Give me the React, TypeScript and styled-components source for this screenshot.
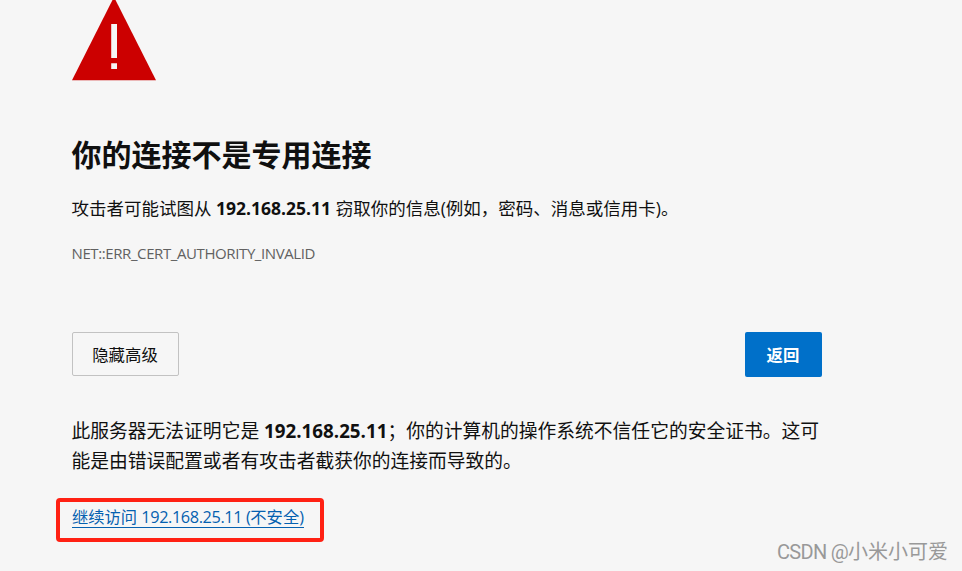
import styled, { createGlobalStyle } from "styled-components";

const GlobalStyle = createGlobalStyle`
  * {
    box-sizing: border-box;
  }

  body {
    margin: 0;
    height: 571px;
    overflow: hidden;
    background: #f6f6f6;
    color: #101010;
    font-family: "Open Sans", "Noto Sans CJK SC", sans-serif;
  }
`;

const Page = styled.main`
  position: relative;
  height: 571px;
  padding-left: 72px;
  overflow: hidden;
`;

const Content = styled.div`
  display: flex;
  flex-direction: column;
  width: 750px;
`;

const WarningIcon = styled.svg`
  display: block;
  width: 84px;
  height: 81px;
`;

const Title = styled.h1`
  margin: 52px 0 0 -0.5px;
  font-size: 30px;
  line-height: 44px;
  font-weight: 700;
`;

const Summary = styled.p`
  margin: 17px 0 0 -0.5px;
  font-size: 17.5px;
  line-height: 28px;
  white-space: nowrap;
`;

const ErrorCode = styled.div`
  margin: 19px 0 0 -0.5px;
  color: #616161;
  font-size: 15px;
  line-height: 24px;
  letter-spacing: -0.4px;
`;

const Actions = styled.div`
  display: flex;
  justify-content: space-between;
  align-items: flex-start;
  margin-top: 67px;
`;

const Button = styled.button<{ $primary?: boolean }>`
  width: ${({ $primary }) => ($primary ? "77px" : "107px")};
  height: ${({ $primary }) => ($primary ? "45px" : "44px")};
  padding: 0 1px 1px 0;
  border: ${({ $primary }) => ($primary ? "0" : "1px solid #c2c2c2")};
  border-radius: 2px;
  background: ${({ $primary }) => ($primary ? "#0070c9" : "transparent")};
  color: ${({ $primary }) => ($primary ? "#fff" : "#101010")};
  font-family: inherit;
  font-size: 16.4px;
  font-weight: ${({ $primary }) => ($primary ? 700 : 400)};
`;

const Details = styled.p`
  margin: 39px 0 0 -0.5px;
  font-size: 18.77px;
  line-height: 30px;
  white-space: nowrap;
`;

const Highlight = styled.div`
  width: 268px;
  height: 44px;
  margin: 22px 0 0 -16px;
  padding: 4px 0 0 12px;
  border: 4px solid #ff2113;
  border-radius: 4px;
`;

const ProceedLink = styled.a`
  display: inline-block;
  height: 21px;
  border-bottom: 1px solid #0561b0;
  color: #0561b0;
  font-size: 16.3px;
  line-height: 20px;
  text-decoration: none;
  white-space: nowrap;
`;

const Address = styled.span`
  letter-spacing: -0.4px;
`;

const Watermark = styled.div`
  position: absolute;
  right: 14px;
  bottom: 4px;
  color: #999;
  font-family: Roboto, "Noto Sans CJK SC", sans-serif;
  font-size: 20px;
  line-height: 30px;
  white-space: nowrap;
`;

const Brand = styled.span`
  letter-spacing: -0.7px;
`;

export default function App() {
  return (
    <>
      <GlobalStyle />
      <Page>
        <Content>
          <WarningIcon viewBox="0 0 84 81">
            <path d="M42 -3L84 80.3H0Z" fill="#c00" />
            <path d="M39.2 24h5.8v34h-5.8zM39.2 63.3h5.8V69h-5.8z" fill="#f6f6f6" />
          </WarningIcon>

          <Title>你的连接不是专用连接</Title>
          <Summary>
            攻击者可能试图从 <strong>192.168.25.11</strong>{" "}
            窃取你的信息(例如，密码、消息或信用卡)。
          </Summary>
          <ErrorCode>NET::ERR_CERT_AUTHORITY_INVALID</ErrorCode>

          <Actions>
            <Button>隐藏高级</Button>
            <Button $primary>返回</Button>
          </Actions>

          <Details>
            此服务器无法证明它是 <strong>192.168.25.11</strong>
            ；你的计算机的操作系统不信任它的安全证书。这可
            <br />
            能是由错误配置或者有攻击者截获你的连接而导致的。
          </Details>

          <Highlight>
            <ProceedLink href="#">
              继续访问 <Address>192.168.25.11 (</Address>不安全)
            </ProceedLink>
          </Highlight>
        </Content>

        <Watermark>
          <Brand>CSDN @</Brand>小米小可爱
        </Watermark>
      </Page>
    </>
  );
}
